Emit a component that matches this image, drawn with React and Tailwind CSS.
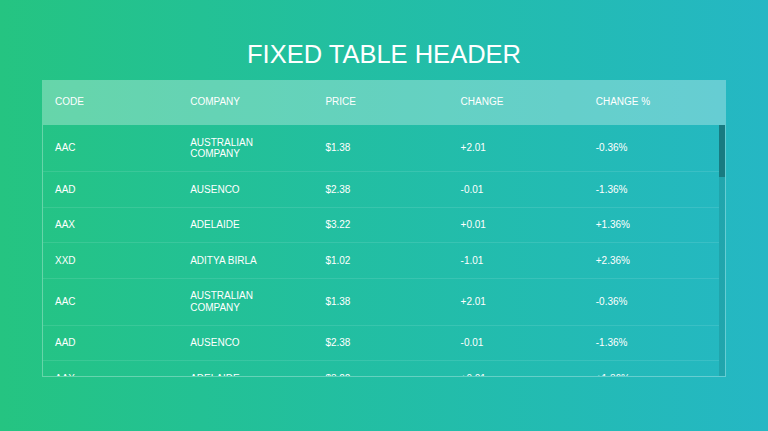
const rows = [
  ['AAC', 'AUSTRALIAN COMPANY', '$1.38', '+2.01', '-0.36%'],
  ['AAD', 'AUSENCO', '$2.38', '-0.01', '-1.36%'],
  ['AAX', 'ADELAIDE', '$3.22', '+0.01', '+1.36%'],
  ['XXD', 'ADITYA BIRLA', '$1.02', '-1.01', '+2.36%'],
]

// only what fits in the visible area; the last row is clipped like the original
const data = [...rows, ...rows].slice(0, 7)

const headers = ['Code', 'Company', 'Price', 'Change', 'Change %']

export default function App() {
  return (
    <div className="min-h-screen bg-linear-to-r from-[#25c481] to-[#25b7c4] font-['Liberation_Sans',Arial,sans-serif] text-white">
      <section className="mx-[42px] pt-[40px]">
        <h1 className="mb-[11px] text-center text-[25.5px] font-normal uppercase leading-[29px]">
          Fixed Table Header
        </h1>

        <div className="bg-white/30 pl-[1px] pr-[7px]">
          <table className="w-full table-fixed">
            <thead>
              <tr>
                {headers.map((h) => (
                  <th
                    key={h}
                    className="px-3 py-4 text-left text-[10px] font-medium uppercase leading-[12px]"
                  >
                    {h}
                  </th>
                ))}
              </tr>
            </thead>
          </table>
        </div>

        <div className="flex h-[253px] border border-white/30">
          <div className="min-w-0 flex-1 overflow-hidden">
            <table className="w-full table-fixed">
              <tbody>
                {data.map((r, i) => (
                  <tr key={i}>
                    {r.map((c, j) => (
                      <td
                        key={j}
                        className="border-b border-white/10 px-3 py-[11.5px] text-left align-middle text-[10px] font-light leading-[11.5px]"
                      >
                        {c}
                      </td>
                    ))}
                  </tr>
                ))}
              </tbody>
            </table>
          </div>
          {/* scrollbar */}
          <div className="w-[6px] shrink-0 bg-black/10">
            <div className="h-[52px] bg-black/25" />
          </div>
        </div>
      </section>
    </div>
  )
}
